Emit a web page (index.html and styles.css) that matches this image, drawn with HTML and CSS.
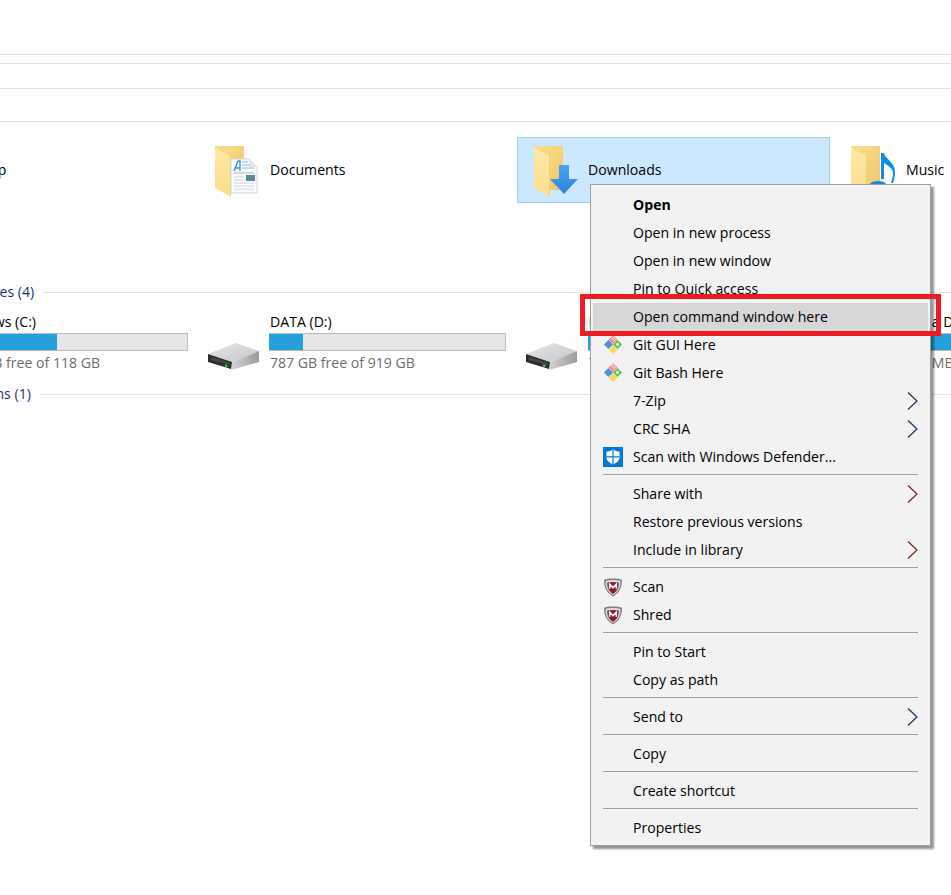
FILE: index.html
```html
<!DOCTYPE html>
<html lang="en">
<head>
<meta charset="utf-8">
<title>This PC</title>
<link rel="stylesheet" href="styles.css">
</head>
<body>
<svg class="defs" width="0" height="0" aria-hidden="true">
  <defs>
    <linearGradient id="back" x1="0" y1="0" x2="1" y2="1"><stop offset="0" stop-color="#fbe08f"/><stop offset="1" stop-color="#eec668"/></linearGradient>
    <linearGradient id="flap" x1="0" y1="0" x2="0" y2="1"><stop offset="0" stop-color="#ffe9a6"/><stop offset="1" stop-color="#fbdd8c"/></linearGradient>
    <linearGradient id="driveTop" x1="0" y1="0" x2="1" y2="1"><stop offset="0" stop-color="#e6e6e8"/><stop offset="1" stop-color="#c4c6c9"/></linearGradient>
    <linearGradient id="driveSide" x1="0" y1="0" x2="1" y2="0"><stop offset="0" stop-color="#d4d4d4"/><stop offset="1" stop-color="#9b9b9b"/></linearGradient>
    <linearGradient id="arrow" x1="0" y1="0" x2="0" y2="1"><stop offset="0" stop-color="#4aa3ef"/><stop offset="1" stop-color="#2a86e0"/></linearGradient>
    <symbol id="folder" viewBox="0 0 32 52">
      <path d="M1 0h29v44H17V10z" fill="url(#back)"/>
      <path d="M1 0l16 9v42L1 42z" fill="url(#flap)"/>
      <path d="M1 0l16 9v42l-1-.5V9.6L1 1z" fill="#f3cf78"/>
    </symbol>
    <symbol id="drive" viewBox="0 0 54 30">
      <path d="M1 13L29 2l23 8-27 11z" fill="url(#driveTop)"/>
      <path d="M25 21l27-11v11L24 29z" fill="url(#driveSide)"/>
      <path d="M1 13l24 8-1 7L1 21z" fill="#2e2e2e"/>
      <path d="M4 16l19 6v2L4 19z" fill="#484848"/>
      <rect x="18" y="23.5" width="2.5" height="2.5" fill="#2ecc40"/>
    </symbol>
    <symbol id="git" viewBox="0 0 22 22">
      <path d="M6 5.5L11 10.5 6 15.5 1 10.5z" fill="#4a90e2"/>
      <path d="M16 5.5L21 10.5 16 15.5 11 10.5z" fill="#6cc04a"/>
      <path d="M11 11L16 16 11 21 6 16z" fill="#f7d95c"/>
      <path d="M11 0L16 5 11 10 6 5z" fill="#f58a8a"/>
      <path d="M8 2l5 5M10 1l4 4" stroke="#fff" stroke-width="1"/>
      <circle cx="16" cy="10.5" r="1.6" fill="#fff"/>
    </symbol>
    <symbol id="defender" viewBox="0 0 20 20">
      <rect width="20" height="20" fill="#0078d7"/>
      <path d="M10 2.500c2 1.400 4.500 2 6.500 2v5.500c0 3.500-2.700 5.800-6.500 7.500C6.200 15.800 3.500 13.500 3.500 10V4.500c2 0 4.500-.6 6.500-2z" fill="#fff"/>
      <path d="M9.400 3h1.200v14.500H9.400zM3.500 9.300h13v1.200h-13z" fill="#0078d7"/>
    </symbol>
    <symbol id="mcafee" viewBox="0 0 18 18">
      <path d="M1 2.500C4 1 14 1 17 2.500c.3 7-2.500 12-8 15C3.500 14.500.7 9.500 1 2.500z" fill="#7f7f7f"/>
      <path d="M2.300 3.500c3-1 10.400-1 13.400 0 .2 6-2 10-6.700 12.700C4.300 13.500 2.100 9.500 2.300 3.500z" fill="#dcdcdc"/>
      <path d="M3.800 5c3-.7 7.400-.7 10.400 0 0 5-1.500 8-5.200 10.300C5.300 13 3.800 10 3.800 5z" fill="#8e1c2c"/>
      <path d="M6 10.500V6.500l3 3 3-3v4" fill="none" stroke="#fff" stroke-width="1.400"/>
    </symbol>
    <symbol id="chev" viewBox="0 0 11 18">
      <path d="M1 .5L10 9 1 17.500" fill="none" stroke="currentColor" stroke-width="1.200"/>
    </symbol>
  </defs>
</svg>

<div class="window">
  <div class="band band-a"></div>
  <div class="band band-b"></div>
  <div class="band band-c"></div>
  <div class="band band-d"></div>

  <main class="view">
    <section class="tiles">
      <div class="tile"><span class="tile-name">Desktop</span></div>
      <div class="tile">
        <span class="tile-icon">
          <svg class="folder-svg"><use href="#folder"/></svg>
          <svg class="badge badge-doc" viewBox="0 0 28 36">
            <path d="M1 1h18l8 8v26H1z" fill="#fafbfc" stroke="#cfd6dc"/>
            <path d="M19 1v8h8z" fill="#e3e7ea"/>
            <path d="M4 13L8 3h2v10M5 10h5" fill="none" stroke="#3d8fd6" stroke-width="1.300"/>
            <path d="M12 4h6M12 7h8M12 10h12M4 15h20" stroke="#8dbde4"/>
            <rect x="16" y="17" width="9" height="6" fill="#5a8a9a"/>
            <path d="M4 19h10M4 22h10M4 25h20M4 28h20M4 31h20" stroke="#d2d8dd"/>
          </svg>
        </span>
        <span class="tile-name">Documents</span>
      </div>
      <div class="tile tile-selected">
        <span class="tile-icon">
          <svg class="folder-svg"><use href="#folder"/></svg>
          <svg class="badge badge-arrow" viewBox="0 0 28 30"><path d="M9 0h10v14h9L14 29 0 14h9z" fill="url(#arrow)"/></svg>
        </span>
        <span class="tile-name">Downloads</span>
      </div>
      <div class="tile">
        <span class="tile-icon">
          <svg class="folder-svg"><use href="#folder"/></svg>
          <svg class="badge badge-note" viewBox="0 0 16 36">
            <path d="M0 0h3c1 6 11 9 11 19 0 4-1 8-2 11h-2c1-3 2-7 2-10 0-5-6-8-9-10V26H0z" fill="#0f8ce9"/>
            <ellipse cx="-3" cy="31" rx="8" ry="3" fill="#0f8ce9"/>
          </svg>
        </span>
        <span class="tile-name">Music</span>
      </div>
    </section>

    <h2 class="group group-drives"><span>Devices and drives (4)</span><i></i></h2>
    <section class="drives">
      <div class="drive">
        <span class="drive-icon"></span>
        <div class="drive-info">
          <div class="drive-name">Windows (C:)</div>
          <div class="bar"><div class="fill" style="width:45%"></div></div>
          <div class="drive-free">91.3 GB free of 118 GB</div>
        </div>
      </div>
      <div class="drive">
        <svg class="drive-icon"><use href="#drive"/></svg>
        <div class="drive-info">
          <div class="drive-name">DATA (D:)</div>
          <div class="bar"><div class="fill" style="width:14.300%"></div></div>
          <div class="drive-free">787 GB free of 919 GB</div>
        </div>
      </div>
      <div class="drive">
        <svg class="drive-icon"><use href="#drive"/></svg>
        <div class="drive-info drive-wide">
          <div class="drive-name split"><span>L</span><span>a D</span></div>
          <div class="bar"><div class="fill" style="width:100%"></div></div>
          <div class="drive-free split"><span>7</span><span>MB</span></div>
        </div>
      </div>
    </section>
    <h2 class="group group-net"><span>Network locations (1)</span><i></i></h2>
  </main>
</div>

<nav class="menu">
  <div class="item strong"><span class="mi"></span>Open</div>
  <div class="item"><span class="mi"></span>Open in new process</div>
  <div class="item"><span class="mi"></span>Open in new window</div>
  <div class="item"><span class="mi"></span>Pin to Quick access</div>
  <div class="item hot"><span class="mi"></span>Open command window here</div>
  <div class="item"><svg class="mi"><use href="#git"/></svg>Git GUI Here</div>
  <div class="item"><svg class="mi"><use href="#git"/></svg>Git Bash Here</div>
  <div class="item"><span class="mi"></span>7-Zip<svg class="chev"><use href="#chev"/></svg></div>
  <div class="item"><span class="mi"></span>CRC SHA<svg class="chev"><use href="#chev"/></svg></div>
  <div class="item"><svg class="mi"><use href="#defender"/></svg>Scan with Windows Defender...</div>
  <div class="sep"></div>
  <div class="item"><span class="mi"></span>Share with<svg class="chev red"><use href="#chev"/></svg></div>
  <div class="item"><span class="mi"></span>Restore previous versions</div>
  <div class="item"><span class="mi"></span>Include in library<svg class="chev red"><use href="#chev"/></svg></div>
  <div class="sep"></div>
  <div class="item"><svg class="mi"><use href="#mcafee"/></svg>Scan</div>
  <div class="item"><svg class="mi"><use href="#mcafee"/></svg>Shred</div>
  <div class="sep"></div>
  <div class="item"><span class="mi"></span>Pin to Start</div>
  <div class="item"><span class="mi"></span>Copy as path</div>
  <div class="sep"></div>
  <div class="item"><span class="mi"></span>Send to<svg class="chev"><use href="#chev"/></svg></div>
  <div class="sep"></div>
  <div class="item"><span class="mi"></span>Copy</div>
  <div class="sep"></div>
  <div class="item"><span class="mi"></span>Create shortcut</div>
  <div class="sep"></div>
  <div class="item"><span class="mi"></span>Properties</div>
</nav>
<div class="callout"></div>
</body>
</html>
```

FILE: styles.css
```css
html, body {
  margin: 0;
  padding: 0;
  width: 951px;
  height: 895px;
  overflow: hidden;
  background: #fff;
  font-family: "Open Sans", "Noto Sans", sans-serif;
  font-size: 14.1px;
  color: #000;
}
.defs { position: absolute; }
.window { width: 951px; height: 895px; overflow: hidden; }
.band { border-bottom: 1px solid #e3e3e3; }
.band-a { height: 54px; }
.band-b { height: 8px; }
.band-c { height: 24px; }
.band-d { height: 32px; }

.view { margin-left: -119px; width: 1400px; padding-top: 15px; }

.tiles { display: flex; gap: 5px; height: 66px; }
.tile {
  width: 313px;
  height: 66px;
  box-sizing: border-box;
  border: 1px solid transparent;
  display: flex;
  align-items: center;
  padding-left: 70px;
  flex: none;
}
.tile:has(.tile-icon) { padding-left: 15px; }
.tile-selected { background: #cce8ff; border-color: #99d1ff; }
.tile-icon { position: relative; width: 55px; height: 52px; flex: none; margin-top: 2px; }
.tile-name { line-height: 20px; }
.folder-svg { position: absolute; left: -1px; top: 1px; width: 32px; height: 52px; }
.tile-selected .folder-svg { left: 0; }
.badge { position: absolute; }
.badge-doc { left: 15px; top: 13px; width: 28px; height: 36px; }
.badge-arrow { left: 17px; top: 20px; width: 28px; height: 30px; }
.badge-note { left: 30px; top: 8px; width: 16px; height: 36px; overflow: visible; }

.group {
  margin: 0;
  font: inherit;
  color: #1e3287;
  display: flex;
  align-items: center;
  gap: 9px;
  height: 20px;
  white-space: nowrap;
  padding-left: 11px;
}
.group span { margin-top: -2px; }
.group i { flex: 1; height: 1px; background: #e3e3e3; }
.group-drives { margin-top: 79px; }
.group-net { margin-top: 9px; }

.drives { display: flex; margin-top: 8px; padding-left: .5px; }
.drive { width: 318.5px; flex: none; display: flex; }
.drive-icon { width: 54px; height: 30px; margin: 31px 8.500px 0 6.500px; flex: none; display: block; }
.drive-info { width: 237px; flex: none; }
.drive-wide { width: 400px; }
.drive-name { line-height: 23px; padding-left: 1px; }
.drive-free { line-height: 24px; color: #6d6d6d; padding-left: 1px; }
.split { display: flex; justify-content: space-between; width: 365px; }
.bar {
  height: 18px;
  box-sizing: border-box;
  background: #e6e6e6;
  border: 1px solid #bcbcbc;
  border-left: 0;
}
.fill { height: 16px; background: #26a0da; }

.menu {
  position: absolute;
  left: 590px;
  top: 184px;
  width: 335px;
  padding: 6px 2px 3px;
  background: #f2f2f2;
  border: 1px solid #a0a0a0;
  box-shadow: 3px 3px 2px rgba(0, 0, 0, .42);
}
.item {
  height: 28px;
  box-sizing: border-box;
  display: flex;
  align-items: center;
  padding: 0 10px 2px;
  white-space: nowrap;
}
.item.strong { font-weight: 700; }
.item.hot { background: #d7d7d7; }
.mi { width: 20px; height: 20px; margin: 2px 10px 0 0; flex: none; display: block; }
.chev { width: 11px; height: 18px; margin: 2px 0 0 auto; color: #17375e; flex: none; }
.chev.red { color: #7d1f1f; }
.sep { height: 1px; margin: 3px 10px 5px; background: #a0a0a0; }

.callout {
  position: absolute;
  left: 580px;
  top: 294px;
  width: 351px;
  height: 32px;
  border: 5px solid #ed1c24;
}
```
